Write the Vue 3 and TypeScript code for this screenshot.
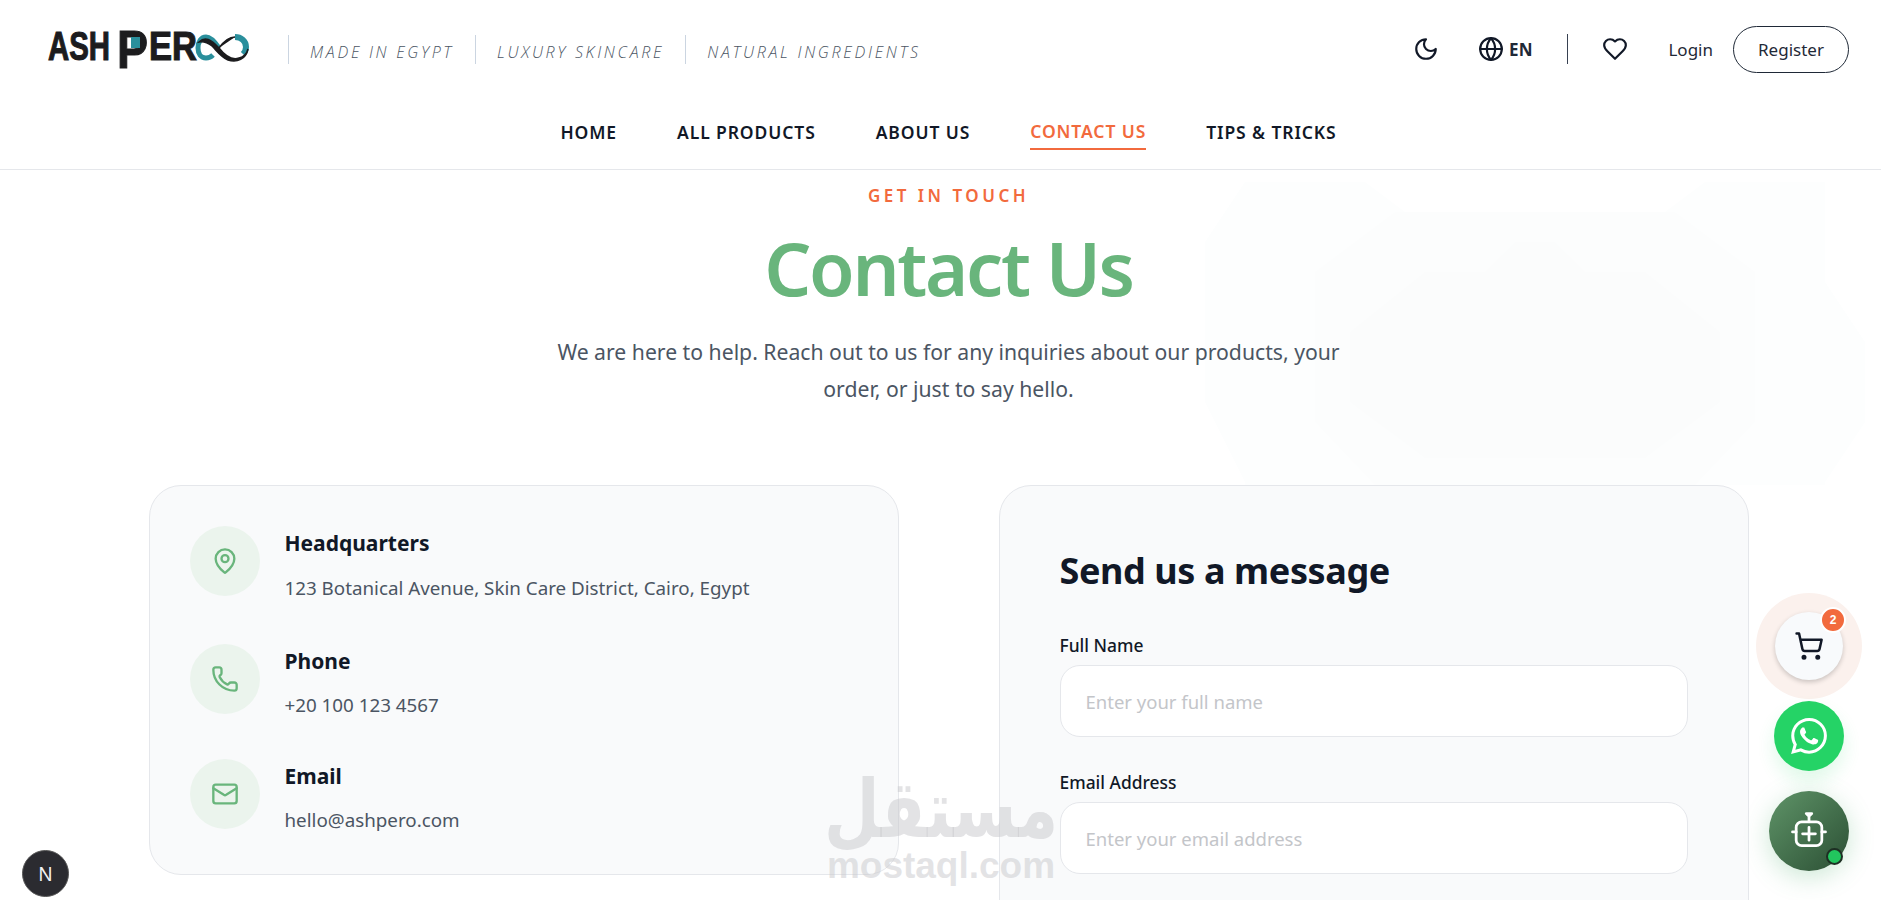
<script setup lang="ts">
const navLinks = [
  { label: 'HOME', active: false },
  { label: 'ALL PRODUCTS', active: false },
  { label: 'ABOUT US', active: false },
  { label: 'CONTACT US', active: true },
  { label: 'TIPS & TRICKS', active: false },
]
const taglines = ['MADE IN EGYPT', 'LUXURY SKINCARE', 'NATURAL INGREDIENTS']
const contacts = [
  { id: 'pin', title: 'Headquarters', text: '123 Botanical Avenue, Skin Care District, Cairo, Egypt' },
  { id: 'phone', title: 'Phone', text: '+20 100 123 4567' },
  { id: 'mail', title: 'Email', text: 'hello@ashpero.com' },
]
const fields = [
  { label: 'Full Name', placeholder: 'Enter your full name' },
  { label: 'Email Address', placeholder: 'Enter your email address' },
]
</script>

<template>
  <div class="page">
    <svg class="bg-shape" viewBox="0 0 660 313" width="660" height="313">
      <path d="M40 10h120l40 30h260l40-30h120v100l40 60v80l-40 60v3H40v-3L0 230V70l40-60Z" fill="#fdfefe" />
      <path d="M110 100 190 40h280l80 60v150l-60 63H170l-60-63Z" fill="#fcfdfd" />
      <path d="M220 100h60l30-30h40l30 30h60l75 60v70l-75 56H220l-75-56v-70Z" fill="#fbfcfc" />
    </svg>

    <header class="site-header">
      <div class="top-row">
        <div class="brand">
          <svg class="logo" viewBox="0 0 202 42" width="202" height="42">
            <g class="logo-text">
              <text x="1" y="32" font-size="40" textLength="62" lengthAdjust="spacingAndGlyphs">ASH</text>
              <text x="70" y="40" font-size="54" textLength="31" lengthAdjust="spacingAndGlyphs">P</text>
              <text x="102" y="32" font-size="40" textLength="48" lengthAdjust="spacingAndGlyphs">ER</text>
            </g>
            <rect x="84" y="9" width="9" height="11" fill="#2a8f9c" />
            <path d="M172 20C166 11 161 9 159 9c-5 0-8 5-8 11s3 10 8 10c2 0 5-1 7-3" fill="none" stroke="#2a8f9c" stroke-width="5" />
            <path d="M188 9c6 0 11 4 11 10 0 2-1 5-3 7" fill="none" stroke="#2a8f9c" stroke-width="6" />
            <path d="M152 14c6-6 12-3 20 6 7 9 14 12 20 10 5-1 8-5 9-9-2 10-11 14-20 11-7-3-11-9-16-14-4-3-8-5-13-4Zm20 6c5-7 10-11 16-11" fill="#1c1c1e" stroke="#1c1c1e" stroke-width="1.500" />
          </svg>
          <ul class="taglines">
            <li v-for="t in taglines" :key="t">{{ t }}</li>
          </ul>
        </div>
        <div class="actions">
          <svg class="ico moon" viewBox="0 0 24 24"><path d="M12 3a6 6 0 0 0 9 9 9 9 0 1 1-9-9Z" /></svg>
          <div class="lang">
            <svg class="ico" viewBox="0 0 24 24"><circle cx="12" cy="12" r="10" /><path d="M2 12h20" /><path d="M12 2a15 15 0 0 1 0 20 15 15 0 0 1 0-20Z" /></svg>
            <span>EN</span>
          </div>
          <span class="vline"></span>
          <svg class="ico heart" viewBox="0 0 24 24"><path d="M19 14c1.500-1.500 3-3.200 3-5.500A5.500 5.500 0 0 0 16.500 3c-1.800 0-3 .5-4.500 2-1.500-1.500-2.700-2-4.500-2A5.500 5.500 0 0 0 2 8.500c0 2.300 1.500 4 3 5.500l7 7Z" /></svg>
          <a class="login">Login</a>
          <a class="register">Register</a>
        </div>
      </div>
      <nav class="main-nav">
        <a v-for="l in navLinks" :key="l.label" class="nav-link" :class="{ active: l.active }">{{ l.label }}</a>
      </nav>
    </header>

    <main class="contact">
      <div class="hero">
        <p class="eyebrow">GET IN TOUCH</p>
        <h1>Contact Us</h1>
        <p class="lead">We are here to help. Reach out to us for any inquiries about our products, your order, or just to say hello.</p>
      </div>
      <div class="columns">
        <section class="card info-card">
          <div v-for="c in contacts" :key="c.id" class="info-row">
            <div class="info-icon">
              <svg v-if="c.id === 'pin'" viewBox="0 0 24 24"><path d="M20 10c0 5-5.500 10.200-7.400 11.800a1 1 0 0 1-1.200 0C9.500 20.200 4 15 4 10a8 8 0 0 1 16 0" /><circle cx="12" cy="10" r="3" /></svg>
              <svg v-else-if="c.id === 'phone'" viewBox="0 0 24 24"><path d="M13.800 16.600a1 1 0 0 0 1.200-.3l.4-.5a2 2 0 0 1 1.600-.8h3a2 2 0 0 1 2 2v3a2 2 0 0 1-2 2A18 18 0 0 1 2 4a2 2 0 0 1 2-2h3a2 2 0 0 1 2 2v3a2 2 0 0 1-.8 1.600l-.5.4a1 1 0 0 0-.3 1.200 14 14 0 0 0 6.400 6.400" /></svg>
              <svg v-else viewBox="0 0 24 24"><path d="m22 7-8.990 5.730a2 2 0 0 1-2.020 0L2 7" /><rect x="2" y="4" width="20" height="16" rx="2" /></svg>
            </div>
            <div class="info-text">
              <h3>{{ c.title }}</h3>
              <p>{{ c.text }}</p>
            </div>
          </div>
        </section>
        <section class="card form-card">
          <h2>Send us a message</h2>
          <div v-for="f in fields" :key="f.label" class="field">
            <label>{{ f.label }}</label>
            <input type="text" :placeholder="f.placeholder" />
          </div>
        </section>
      </div>
    </main>

    <div class="watermark">
      <span class="wm-ar">مستقل</span>
      <span class="wm-en">mostaql.com</span>
    </div>

    <div class="next-badge"><span>N</span></div>

    <div class="cart-halo">
      <button class="cart-btn">
        <svg viewBox="0 0 24 24"><circle cx="8" cy="21" r="1" /><circle cx="19" cy="21" r="1" /><path d="M2.050 2.050h2l2.660 12.420a2 2 0 0 0 2 1.580h9.780a2 2 0 0 0 1.950-1.570l1.650-7.430H5.120" /></svg>
        <span class="cart-count">2</span>
      </button>
    </div>
    <button class="wa-btn">
      <svg viewBox="0 0 24 24"><path d="M17.472 14.382c-.297-.149-1.758-.867-2.030-.967-.273-.099-.471-.148-.670.150-.197.297-.767.966-.940 1.164-.173.199-.347.223-.644.075-.297-.150-1.255-.463-2.390-1.475-.883-.788-1.480-1.761-1.653-2.059-.173-.297-.018-.458.130-.606.134-.133.298-.347.446-.520.149-.174.198-.298.298-.497.099-.198.050-.371-.025-.520-.075-.149-.669-1.612-.916-2.207-.242-.579-.487-.500-.669-.510-.173-.008-.371-.010-.570-.010-.198 0-.520.074-.792.372-.272.297-1.040 1.016-1.040 2.479 0 1.462 1.065 2.875 1.213 3.074.149.198 2.096 3.200 5.077 4.487.709.306 1.262.489 1.694.625.712.227 1.360.195 1.871.118.571-.085 1.758-.719 2.006-1.413.248-.694.248-1.289.173-1.413-.074-.124-.272-.198-.570-.347m-5.421 7.403h-.004a9.870 9.870 0 0 1-5.031-1.378l-.361-.214-3.741.982.998-3.648-.235-.374a9.860 9.860 0 0 1-1.510-5.260c.001-5.450 4.436-9.884 9.888-9.884 2.640 0 5.122 1.030 6.988 2.898a9.825 9.825 0 0 1 2.893 6.994c-.003 5.450-4.437 9.884-9.885 9.884m8.413-18.297A11.815 11.815 0 0 0 12.050 0C5.495 0 .16 5.335.157 11.892c0 2.096.547 4.142 1.588 5.945L.057 24l6.305-1.654a11.882 11.882 0 0 0 5.683 1.448h.005c6.554 0 11.890-5.335 11.893-11.893a11.821 11.821 0 0 0-3.480-8.413z" /></svg>
    </button>
    <button class="bot-btn">
      <svg viewBox="0 0 24 24"><rect x="5" y="7" width="14" height="13" rx="3" /><path d="M12 4v3M10.500 2.500h3L12 4ZM3 12.500h2M19 12.500h2M12 10v7M8.500 13.500h7" /></svg>
      <span class="bot-dot"></span>
    </button>
  </div>
</template>

<style>
html, body {
  margin: 0;
  overflow: hidden;
  background: #fff;
}
</style>

<style scoped>
.page {
  position: relative;
  width: 1897px;
  height: 900px;
  overflow: hidden;
  font-family: "Noto Sans", "Open Sans", sans-serif;
  color: #111827;
  background: #fff;
}
.bg-shape {
  position: absolute;
  left: 1205px;
  top: 172px;
}

/* header */
.site-header {
  position: relative;
  height: 169px;
  border-bottom: 1px solid #e5e7eb;
  box-sizing: content-box;
}
.top-row {
  display: flex;
  justify-content: space-between;
  align-items: center;
  height: 98px;
  padding: 0 48px 0 47px;
}
.brand {
  display: flex;
  align-items: center;
}
.logo {
  flex: none;
  overflow: visible;
}
.logo-text {
  font-family: "Liberation Sans", sans-serif;
  font-weight: 700;
  fill: #1c1c1e;
  stroke: #1c1c1e;
  stroke-width: 1.1px;
}
.taglines {
  display: flex;
  list-style: none;
  margin: 0 0 0 39px;
  padding: 0;
}
.taglines li {
  border-left: 1px solid #cbd5e1;
  padding: 0 21px;
  height: 29px;
  line-height: 35px;
  font-size: 16px;
  font-style: italic;
  font-weight: 300;
  letter-spacing: 2.72px;
  color: #4b5563;
  font-family: "Open Sans", sans-serif;
}
.actions {
  display: flex;
  align-items: center;
}
.ico {
  width: 26px;
  height: 26px;
  fill: none;
  stroke: #111827;
  stroke-width: 2;
  stroke-linecap: round;
  stroke-linejoin: round;
  flex: none;
}
.moon {
  margin-right: 39px;
}
.lang {
  display: flex;
  align-items: center;
  gap: 5px;
  font-weight: 700;
  font-size: 17px;
  color: #1f2937;
}
.vline {
  width: 1px;
  height: 30px;
  background: #374151;
  margin: 0 34px 0 35px;
}
.heart {
  margin-right: 40px;
}
.login {
  font-size: 17px;
  color: #1f2937;
  margin-right: 20px;
}
.register {
  display: flex;
  align-items: center;
  justify-content: center;
  width: 116px;
  height: 47px;
  box-sizing: border-box;
  border: 1px solid #1f2937;
  border-radius: 24px;
  font-size: 17px;
  color: #1f2937;
}
.main-nav {
  display: flex;
  justify-content: center;
  gap: 60px;
  height: 71px;
}
.nav-link {
  align-self: flex-start;
  margin-top: 23px;
  padding-bottom: 5px;
  font-size: 17.5px;
  line-height: 23px;
  font-weight: 600;
  letter-spacing: 0.9px;
  color: #111827;
  border-bottom: 2px solid transparent;
}
.nav-link.active {
  margin-top: 22px;
  color: #f26a3d;
  border-bottom-color: #f26a3d;
}

/* hero */
.contact {
  position: relative;
  padding-top: 14px;
}
.hero {
  text-align: center;
}
.eyebrow {
  margin: 0;
  font-size: 17px;
  line-height: 24px;
  font-weight: 600;
  letter-spacing: 3.5px;
  color: #f26a3d;
}
h1 {
  margin: 15px 0 0;
  font-size: 74px;
  line-height: 90px;
  font-weight: 600;
  letter-spacing: -2.3px;
  color: #69b57c;
}
.lead {
  width: 800px;
  margin: 20px auto 0;
  font-size: 21.2px;
  line-height: 37px;
  color: #4b5563;
}

/* cards */
.columns {
  display: grid;
  grid-template-columns: 750px 750px;
  gap: 100px;
  justify-content: center;
  align-items: start;
  margin-top: 78px;
}
.card {
  background: #f9fafb;
  border: 1px solid #e5e7eb;
  border-radius: 32px;
  box-sizing: border-box;
}
.info-card {
  height: 390px;
  padding: 40px;
  display: flex;
  flex-direction: column;
  gap: 43px;
}
.info-row {
  display: flex;
  gap: 25px;
  height: 72px;
}
.info-row:first-child {
  height: 75px;
}
.info-row:first-child p {
  margin-top: 13px;
}
.info-icon {
  width: 70px;
  height: 70px;
  flex: none;
  border-radius: 50%;
  background: #ebf4ed;
  display: flex;
  align-items: center;
  justify-content: center;
}
.info-icon svg {
  width: 28px;
  height: 28px;
  fill: none;
  stroke: #69b57c;
  stroke-width: 2;
  stroke-linecap: round;
  stroke-linejoin: round;
}
.info-text h3 {
  margin: 0;
  font-size: 21px;
  line-height: 34px;
  font-weight: 700;
  color: #111827;
}
.info-text p {
  margin: 12px 0 0;
  font-size: 18.8px;
  line-height: 30px;
  color: #4b5563;
}
.form-card {
  min-height: 560px;
  padding: 60px;
}
.form-card h2 {
  margin: 1px 0 38px;
  font-size: 36px;
  line-height: 48px;
  font-weight: 700;
  letter-spacing: -0.4px;
  color: #111827;
}
.field {
  margin-bottom: 33px;
}
.field label {
  display: block;
  margin-bottom: 8px;
  font-size: 17.4px;
  line-height: 24px;
  font-weight: 500;
  color: #111827;
}
.field input {
  display: block;
  width: 100%;
  height: 72px;
  box-sizing: border-box;
  padding: 0 25px;
  border: 1px solid #e5e7eb;
  border-radius: 20px;
  background: #fff;
  font-family: inherit;
  font-size: 18.5px;
}
.field input::placeholder {
  color: #c3c5c9;
}

/* watermark */
.watermark {
  position: absolute;
  left: 826px;
  top: 772px;
  width: 230px;
  display: flex;
  flex-direction: column;
  align-items: center;
  color: rgba(200, 200, 204, 0.5);
  font-family: "DejaVu Sans", sans-serif;
  font-weight: 700;
  pointer-events: none;
}
.wm-ar {
  font-size: 64px;
  line-height: 74px;
  transform: scaleY(1.25);
}
.wm-en {
  font-size: 37px;
  line-height: 40px;
  font-family: "Liberation Sans", sans-serif;
}

/* floating */
.next-badge {
  position: absolute;
  left: 22px;
  top: 850px;
  width: 47px;
  height: 47px;
  border-radius: 50%;
  background: #2b2b30;
  border: 1px solid #555;
  box-sizing: border-box;
  display: flex;
  align-items: center;
  justify-content: center;
  color: #f3f3f3;
  font-size: 19px;
}
button {
  border: 0;
  padding: 0;
}
.cart-halo {
  position: absolute;
  left: 1756px;
  top: 593px;
  width: 106px;
  height: 106px;
  border-radius: 50%;
  background: #fbf1ed;
  display: flex;
  align-items: center;
  justify-content: center;
}
.cart-btn {
  position: relative;
  width: 68px;
  height: 68px;
  border-radius: 50%;
  background: #f8fafc;
  box-shadow: 0 2px 5px rgba(0, 0, 0, 0.2);
  display: flex;
  align-items: center;
  justify-content: center;
}
.cart-btn svg {
  width: 30px;
  height: 30px;
  fill: none;
  stroke: #111827;
  stroke-width: 2;
  stroke-linecap: round;
  stroke-linejoin: round;
}
.cart-count {
  position: absolute;
  right: -3px;
  top: -5px;
  width: 22px;
  height: 22px;
  border-radius: 50%;
  border: 2px solid #fff;
  background: #f26a3d;
  color: #fff;
  font-size: 12px;
  font-weight: 700;
  line-height: 22px;
  text-align: center;
}
.wa-btn {
  position: absolute;
  left: 1774px;
  top: 701px;
  width: 70px;
  height: 70px;
  border-radius: 50%;
  background: #25d366;
  box-shadow: 0 10px 18px rgba(37, 211, 102, 0.14);
  display: flex;
  align-items: center;
  justify-content: center;
}
.wa-btn svg {
  width: 36px;
  height: 36px;
  fill: #fff;
}
.bot-btn {
  position: absolute;
  left: 1769px;
  top: 791px;
  width: 80px;
  height: 80px;
  border-radius: 50%;
  background: linear-gradient(135deg, #5f9468, #2b4f34);
  box-shadow: 0 6px 26px rgba(70, 170, 100, 0.28);
  display: flex;
  align-items: center;
  justify-content: center;
}
.bot-btn svg {
  width: 44px;
  height: 44px;
  fill: none;
  stroke: #fff;
  stroke-width: 1.500;
  stroke-linecap: round;
  stroke-linejoin: round;
}
.bot-dot {
  position: absolute;
  right: 6px;
  bottom: 6px;
  width: 13px;
  height: 13px;
  border-radius: 50%;
  background: #22c55e;
  border: 2px solid #1d2f23;
}
</style>
